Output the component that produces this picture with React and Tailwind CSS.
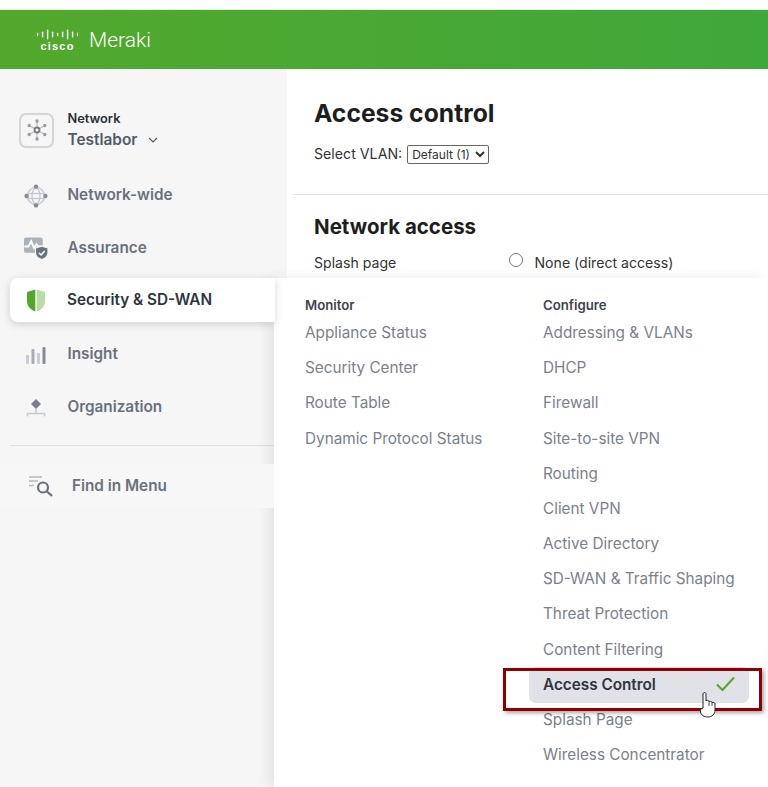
import React from "react";

const sans = { fontFamily: "Inter, 'Noto Sans', sans-serif" };

function CiscoBars() {
  const hs = [3.5, 6, 10, 6, 3.5, 6, 10, 6, 3.5];
  return (
    <svg width="41" height="11" viewBox="0 0 41 11" className="block">
      {hs.map((h, i) => (
        <rect key={i} x={i * 5 - 0.1} y={(11 - h) / 2} width="1.4" height={h} rx="0.7" fill="#fff" />
      ))}
    </svg>
  );
}

function NetworkIcon() {
  const rays = [0, 60, 120, 180, 240, 300];
  return (
    <svg width="24" height="24" viewBox="0 0 24 24">
      {rays.map((a) => (
        <g key={a} transform={`rotate(${a} 12 12)`}>
          <line x1="12" y1="9" x2="12" y2="4" stroke="#b6bac0" strokeWidth="1.2" />
          <circle cx="12" cy="3" r="1.7" fill="#989da5" />
        </g>
      ))}
      <circle cx="12" cy="12" r="2.5" fill="#fff" stroke="#737a84" strokeWidth="1.8" />
    </svg>
  );
}

function GlobeIcon() {
  return (
    <svg width="24" height="24" viewBox="0 0 24 24">
      <circle cx="12" cy="12" r="8.6" fill="none" stroke="#c5c9cf" strokeWidth="1.3" />
      <ellipse cx="12" cy="12" rx="4" ry="8" fill="none" stroke="#c5c9cf" strokeWidth="1.3" />
      <line x1="4" y1="9.5" x2="20" y2="9.5" stroke="#c5c9cf" strokeWidth="1.3" />
      <line x1="4" y1="14.5" x2="20" y2="14.5" stroke="#c5c9cf" strokeWidth="1.3" />
      <circle cx="12" cy="2.6" r="2.2" fill="#858b94" />
      <circle cx="12" cy="21.4" r="2.2" fill="#858b94" />
      <circle cx="2.6" cy="12" r="2.2" fill="#858b94" />
      <circle cx="21.4" cy="12" r="2.2" fill="#858b94" />
    </svg>
  );
}

function AssuranceIcon() {
  return (
    <svg width="25" height="23" viewBox="0 0 25 23">
      <rect x="0" y="0" width="19.5" height="16" rx="2" fill="#adb2b9" />
      <path d="M0.5 9.5 H4.5 L7.5 4 L10.5 11 L13 7 L15 9.5 H19" fill="none" stroke="#fff" strokeWidth="2" />
      <path d="M18.5 9 L25 11 V16 C25 19.5 22 21.8 18.5 23 C15 21.8 12 19.5 12 16 V11 Z" fill="#6b727c" stroke="#f6f6f6" strokeWidth="1.2" />
      <path d="M15.6 16 L17.8 18.2 L21.6 14.2" fill="none" stroke="#fff" strokeWidth="1.6" />
    </svg>
  );
}

function ShieldIcon() {
  return (
    <svg width="20" height="23" viewBox="0 0 20 23">
      <path d="M9.3 0.5 V22.5 C4 20.5 1 17 1 12 V3 Z" fill="#52a82c" />
      <path d="M10.7 0.5 V22.5 C16 20.5 19 17 19 12 V3 Z" fill="#b9dca8" />
    </svg>
  );
}

function InsightIcon() {
  return (
    <svg width="22" height="18" viewBox="0 0 22 18">
      <rect x="1" y="9" width="3" height="9" rx="1" fill="#c9ccd1" />
      <rect x="6.5" y="3" width="3" height="15" rx="1" fill="#a9aeb6" />
      <rect x="12" y="7" width="3" height="11" rx="1" fill="#c9ccd1" />
      <rect x="17.5" y="1" width="3" height="17" rx="1" fill="#858b94" />
    </svg>
  );
}

function OrgIcon() {
  return (
    <svg width="20" height="18" viewBox="0 0 20 18">
      <path d="M10 0 L15 5 L10 10 L5 5 Z" fill="#79808a" />
      <path d="M1.5 17.5 V14.5 H18.5 V17.5 M10 10 V14.5" fill="none" stroke="#c8ccd1" strokeWidth="1.6" />
    </svg>
  );
}

function FindIcon() {
  return (
    <svg width="24" height="21" viewBox="0 0 24 21">
      <path d="M0 1 H13 M0 5 H9 M0 9.5 H5" stroke="#b4b8bf" strokeWidth="1.6" fill="none" />
      <circle cx="14" cy="11.5" r="5" fill="none" stroke="#68707a" strokeWidth="2.2" />
      <line x1="18" y1="15.5" x2="23" y2="20" stroke="#68707a" strokeWidth="2.2" />
    </svg>
  );
}

function NavItem({ icon, label }) {
  return (
    <div className="flex items-center h-[53px] pl-[24px]">
      <span className="w-[24px] flex justify-center">{icon}</span>
      <span className="ml-[19.5px] text-[15.3px] font-semibold text-[#6a717b]">{label}</span>
    </div>
  );
}

function FlyLink({ label }) {
  return <div className="h-[35.17px] flex items-center text-[15.3px] text-[#7b818a]">{label}</div>;
}

export default function App() {
  return (
    <div className="relative w-[768px] h-[787px] overflow-hidden bg-white" style={sans}>
      <div className="h-[10px] bg-white border-b border-[#e8e8e8]" />
      <header className="h-[59px] bg-gradient-to-r from-[#52a82c] to-[#3fa83a] flex items-center pl-[37px]">
        <div className="flex flex-col items-center w-[41px]">
          <CiscoBars />
          <span className="text-[11px] leading-[10px] font-bold tracking-[1.2px] text-white mt-[1px]" style={{ fontFamily: "'Liberation Sans', sans-serif" }}>cisco</span>
        </div>
        <span className="ml-[11px] mt-[3px] text-[21px] font-light text-white" style={{ fontFamily: "Roboto, sans-serif" }}>Meraki</span>
      </header>

      <div className="flex h-[718px]">
        <aside className="w-[287px] shrink-0 bg-[#f6f6f6] pt-[42px]">
          <div className="flex items-center pl-[19px] h-[42px]">
            <div className="w-[35px] h-[35px] mb-[4px] rounded-[7px] border-2 border-[#d5d5d5] flex items-center justify-center">
              <NetworkIcon />
            </div>
            <div className="ml-[13.5px]">
              <div className="text-[12.8px] leading-[16px] font-semibold text-[#2b2f36]">Network</div>
              <div className="flex items-center text-[15.4px] leading-[26px] font-semibold text-[#535a66]">
                Testlabor
                <svg className="ml-[11px]" width="10" height="6" viewBox="0 0 10 6"><path d="M1 1 L5 5 L9 1" fill="none" stroke="#535a66" strokeWidth="1.2" /></svg>
              </div>
            </div>
          </div>
          <div className="mt-[16px]">
            <NavItem icon={<GlobeIcon />} label="Network-wide" />
            <NavItem icon={<AssuranceIcon />} label="Assurance" />
            <div className="h-[53px]" />
            <NavItem icon={<InsightIcon />} label="Insight" />
            <NavItem icon={<OrgIcon />} label="Organization" />
          </div>
          <div className="mt-[11px] ml-[10px] mr-[13px] h-px bg-[#dfe1e6]" />
          <div className="relative z-20 flex items-center h-[44px] w-[274px] mt-[18px] pl-[29px] bg-[#f7f7f7]">
            <FindIcon />
            <span className="ml-[19px] text-[15.3px] font-semibold text-[#6a717b]">Find in Menu</span>
          </div>
        </aside>

        <main className="flex-1 min-w-0 pt-[29px]">
          <div className="pl-[27px]">
            <h1 className="text-[24.7px] leading-[30px] font-bold text-[#1e1e1e]">Access control</h1>
            <div className="mt-[16px] flex items-center h-[20px] text-[14.2px] text-[#333]">
              <span>Select VLAN:</span>
              <select className="ml-[5px] h-[19px] w-[82px] border border-[#666] rounded-[2px] text-[12px] text-[#333] bg-white appearance-auto" style={sans}>
                <option>Default (1)</option>
              </select>
            </div>
          </div>
          <div className="mt-[30px] ml-[5px] h-px bg-[#e5e5e5]" />
          <div className="pl-[27px] mt-[19px]">
            <h2 className="text-[20.5px] leading-[26px] font-bold text-[#1e1e1e]">Network access</h2>
            <div className="flex items-start mt-[12px] text-[14.1px] text-[#333]">
              <span className="w-[195px]">Splash page</span>
              <span className="mt-[1px] w-[14px] h-[14px] rounded-full border border-[#777] bg-white" />
              <span className="ml-[11.5px]">None (direct access)</span>
            </div>
          </div>
        </main>
      </div>

      {/* selected sidebar tab, over the flyout's edge */}
      <div className="absolute left-[10px] top-[278px] w-[265px] h-[44px] bg-white rounded-l-[8px] shadow-[0_2px_8px_rgba(0,0,0,0.16)] flex items-center pl-[16px] z-20">
        <span className="w-[20px] flex justify-center"><ShieldIcon /></span>
        <span className="ml-[21px] mt-[1px] text-[15.3px] font-semibold text-[#2f343c]">Security &amp; SD-WAN</span>
      </div>

      {/* flyout menu */}
      <div className="absolute left-[274px] top-[278px] w-[493px] h-[509px] bg-white shadow-[-6px_0_12px_rgba(0,0,0,0.07)] z-10 flex pt-[19px]">
        <div className="w-[238px] pl-[31px] shrink-0">
          <div className="text-[13.2px] leading-[16px] font-semibold text-[#3f444c] mb-[3px]">Monitor</div>
          {["Appliance Status", "Security Center", "Route Table", "Dynamic Protocol Status"].map((t) => (
            <FlyLink key={t} label={t} />
          ))}
        </div>
        <div className="flex-1 pl-[31px]">
          <div className="text-[13.2px] leading-[16px] font-semibold text-[#3f444c] mb-[3px]">Configure</div>
          {["Addressing & VLANs", "DHCP", "Firewall", "Site-to-site VPN", "Routing", "Client VPN", "Active Directory", "SD-WAN & Traffic Shaping", "Threat Protection", "Content Filtering"].map((t) => (
            <FlyLink key={t} label={t} />
          ))}
          <div className="relative h-[35.17px] flex items-center text-[15.3px] font-semibold text-[#2f343c]">
            <div className="absolute -left-[14px] -top-[1px] w-[220px] h-[36.5px] rounded-[7px] bg-[#e0e2e7]" />
            <span className="relative">Access Control</span>
            <svg className="absolute left-[173px] top-[8px]" width="19" height="16" viewBox="0 0 19 16"><path d="M1 8.5 L6.5 14 L18 1.5" fill="none" stroke="#52a82c" strokeWidth="2" /></svg>
          </div>
          <FlyLink label="Splash Page" />
          <FlyLink label="Wireless Concentrator" />
        </div>
      </div>

      {/* annotation rectangle */}
      <div className="absolute left-[503px] top-[668px] w-[259px] h-[43px] border-[3px] border-[#900000] shadow-[2px_2px_4px_rgba(0,0,0,0.35)] z-30" />

      {/* mouse cursor */}
      <svg className="absolute left-[699px] top-[691px] z-40" width="18" height="27" viewBox="0 0 18 27">
        <path d="M4 14 V3 C4 1 7 1 7 3 V10 C7 9 10 9 10 10.5 V11 C10 10 13 10 13 11.5 V12 C13 11 16 11 16 13 V19 C16 23 13 26 9 26 C5 26 2 24 1.5 21 C1 19 2 17.5 4 17 Z" fill="#fff" stroke="#222" strokeWidth="1" />
        <path d="M10 11 V15 M13 12 V15" fill="none" stroke="#222" strokeWidth="0.8" />
      </svg>
    </div>
  );
}
